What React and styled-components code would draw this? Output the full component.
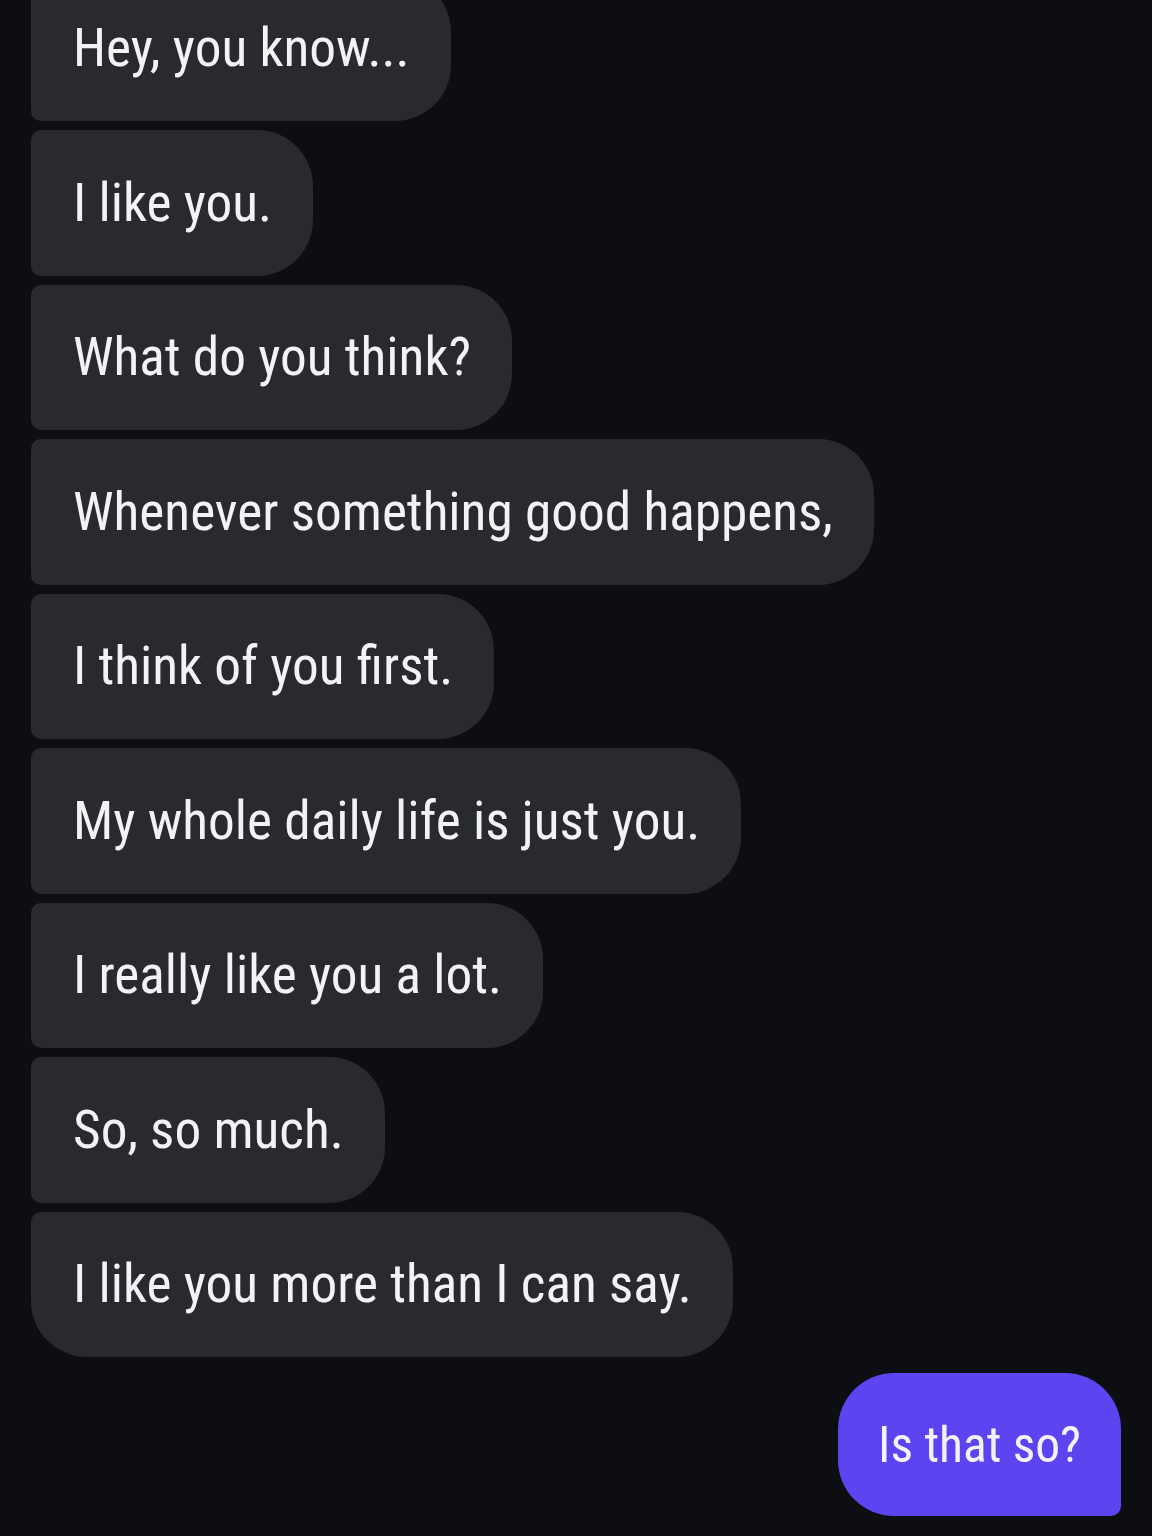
import React from "react";
import styled, { createGlobalStyle } from "styled-components";

const GlobalStyle = createGlobalStyle`
  html, body {
    margin: 0;
    padding: 0;
    background: #0c0e12;
  }
  body {
    font-family: "Roboto Condensed", Roboto, "Liberation Sans", sans-serif;
    -webkit-font-smoothing: antialiased;
  }
`;

const messages = [
  "Hey, you know...",
  "I like you.",
  "What do you think?",
  "Whenever something good happens,",
  "I think of you first.",
  "My whole daily life is just you.",
  "I really like you a lot.",
  "So, so much.",
  "I like you more than I can say.",
];

const Screen = styled.div`
  width: 1152px;
  height: 1536px;
  overflow: hidden;
  background: #0c0e12;
`;

const Thread = styled.div`
  display: flex;
  flex-direction: column;
  gap: 9px;
  margin-top: -24.5px;
  padding: 0 31px;
`;

const Bubble = styled.div`
  align-self: ${(p) => (p.$mine ? "flex-end" : "flex-start")};
  height: ${(p) => (p.$mine ? "143px" : "145.5px")};
  display: flex;
  align-items: center;
  padding: ${(p) => (p.$mine ? "0 40px 0 40px" : "0 41px 0 42px")};
  box-sizing: border-box;
  background: ${(p) => (p.$mine ? "#5c45f1" : "#282a2f")};
  color: ${(p) => (p.$mine ? "#f4f1ff" : "#f2f3f5")};
  font-size: ${(p) => (p.$mine ? "49.5px" : "53.3px")};
  font-weight: 400;
  white-space: nowrap;
  border-radius: ${(p) =>
    p.$mine
      ? "56px 56px 10px 56px"
      : p.$last
      ? "10px 56px 56px 56px"
      : "10px 56px 56px 10px"};
  margin-top: ${(p) => (p.$mine ? "7px" : "0")};
`;

export default function App() {
  return (
    <Screen>
      <GlobalStyle />
      <Thread>
        {messages.map((m, i) => (
          <Bubble key={i} $last={i === messages.length - 1}>
            {m}
          </Bubble>
        ))}
        <Bubble $mine>Is that so?</Bubble>
      </Thread>
    </Screen>
  );
}
